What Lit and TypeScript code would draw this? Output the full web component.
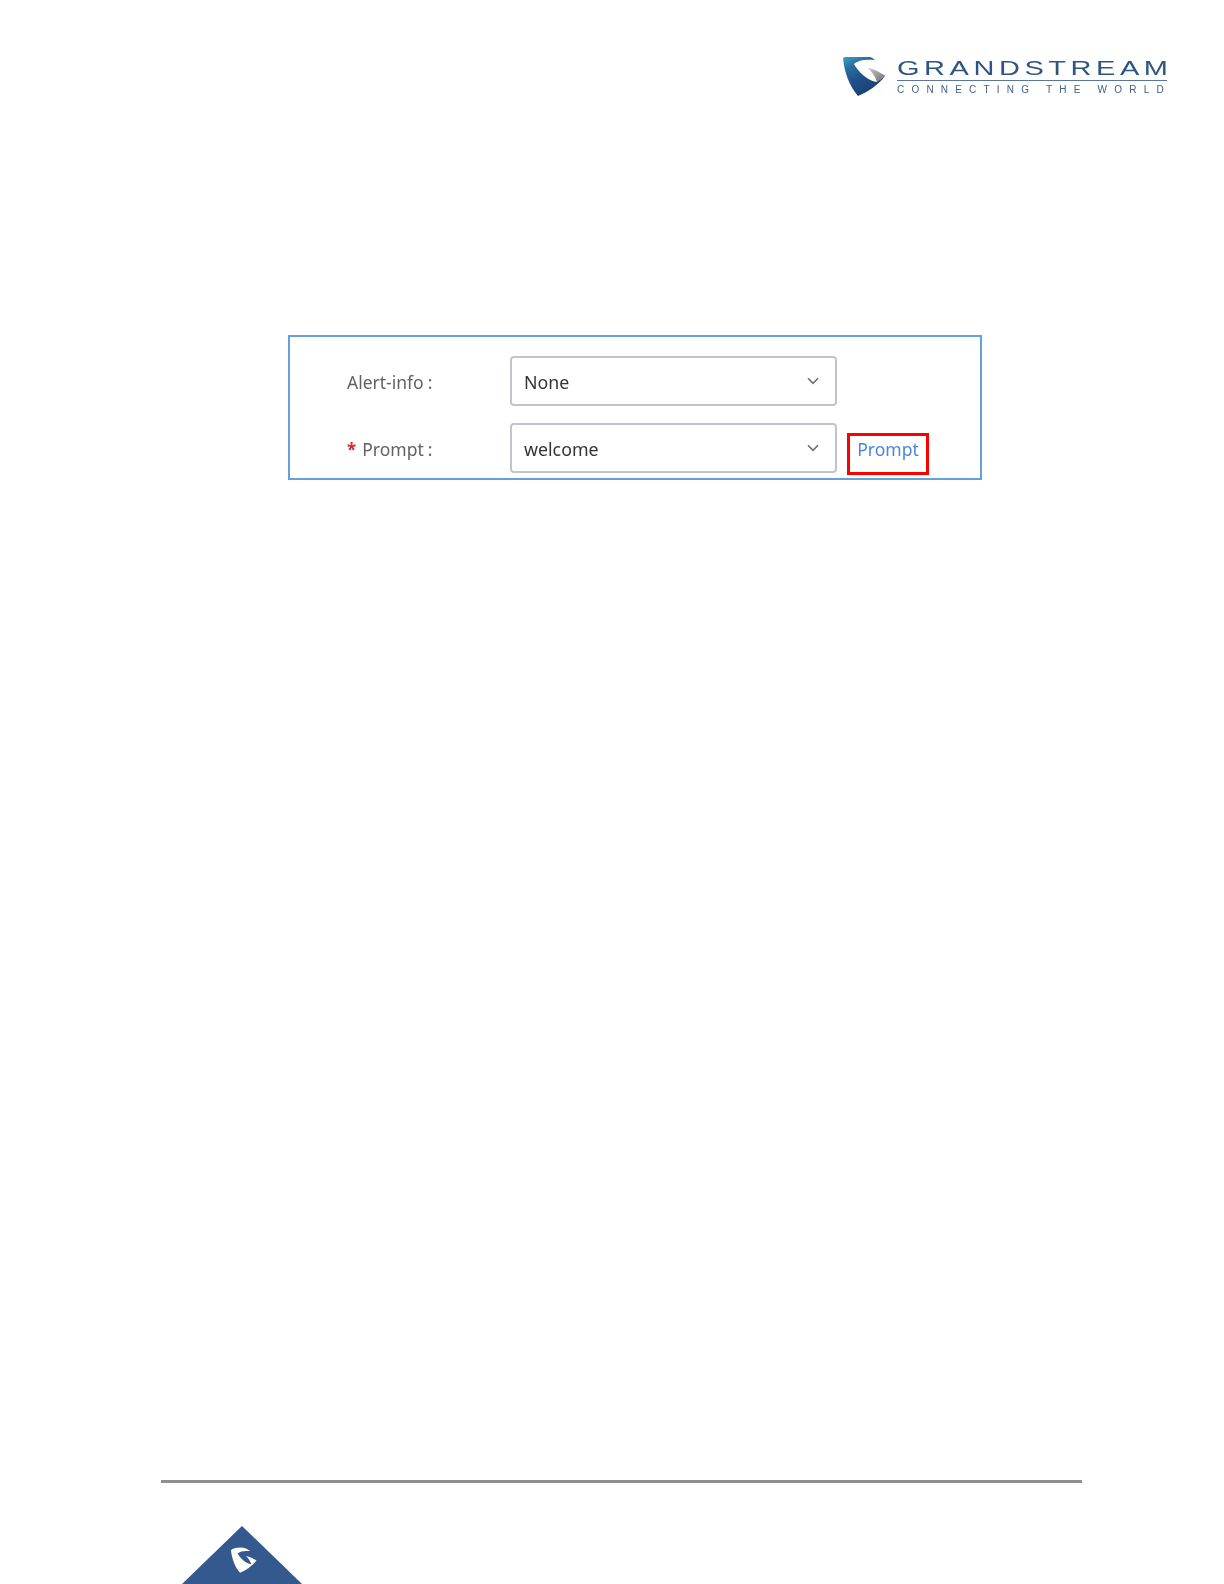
import { LitElement, html, css, svg } from "lit";
import { customElement } from "lit/decorators.js";

const chevron = html`<svg class="chev" viewBox="0 0 12 8" width="12" height="8"><path d="M1 1.2 L6 6.4 L11 1.2" fill="none" stroke="#6f6f6f" stroke-width="1.6"/></svg>`;

@customElement("app-root")
export class AppRoot extends LitElement {
  static styles = css`
    :host {
      display: block;
      position: relative;
      width: 1224px;
      height: 1584px;
      overflow: hidden;
      background: #fff;
      font-family: "Noto Sans", "Open Sans", sans-serif;
    }
    .page {
      height: 1584px;
      display: flex;
      flex-direction: column;
    }
    .header {
      display: flex;
      justify-content: flex-end;
      align-items: flex-start;
      gap: 9px;
      padding: 57px 57px 0 0;
      height: 40px;
      filter: blur(0.4px);
    }
    .mark { display: block; }
    .word {
      width: 270px;
      display: flex;
      flex-direction: column;
      color: #2f5583;
      font-family: "Liberation Sans", sans-serif;
    }
    .brand {
      font-size: 21px;
      line-height: 22px;
      height: 21px;
      letter-spacing: 3.3px;
      white-space: nowrap;
      transform: scaleX(1.38);
      transform-origin: left center;
    }
    .rule { height: 1px; background: #5b7796; margin-top: 2px; }
    .tag {
      font-size: 10px;
      line-height: 12px;
      margin-top: 3px;
      letter-spacing: 7.2px;
      white-space: nowrap;
      color: #3f6288;
    }
    .panel {
      box-sizing: border-box;
      width: 694px;
      height: 145px;
      margin: 238px 0 0 288px;
      border: 2px solid #64a0dc;
      padding: 19px 0 0 57px;
      display: flex;
      flex-direction: column;
      gap: 17px;
      filter: blur(0.3px);
    }
    .row { display: flex; align-items: flex-start; height: 50px; }
    .label {
      width: 163px;
      flex: none;
      height: 50px;
      padding-top: 2px;
      box-sizing: border-box;
      display: flex;
      align-items: center;
      font-size: 17.5px;
      color: #626262;
    }
    .req { color: #d9262c; margin-right: 6px; font-size: 17px; font-weight: 700; }
    .colon { margin-left: 4px; }
    .select {
      box-sizing: border-box;
      width: 327px;
      height: 50px;
      flex: none;
      border: 2px solid #c0c4cc;
      border-radius: 4px;
      display: flex;
      align-items: center;
      justify-content: space-between;
      padding: 2px 16px 0 12px;
      font-size: 17.8px;
      color: #333;
    }
    .chev { margin-top: -2px; }
    .link {
      box-sizing: border-box;
      flex: none;
      width: 82px;
      height: 42px;
      margin: 10px 0 0 10px;
      border: 3px solid #ff0000;
      display: flex;
      align-items: flex-start;
      justify-content: center;
      padding-top: 1px;
      font-size: 17.5px;
      line-height: 24px;
      color: #4a86e0;
    }
    .foot { margin-top: auto; display: flex; flex-direction: column; }
    .line {
      height: 3px;
      width: 921px;
      margin-left: 161px;
      background: #8f8f8f;
      filter: blur(0.4px);
    }
    .tri { display: block; margin: 43px 0 0 182px; }
  `;

  render() {
    const gBody = svg`<path d="M5 11 C15 6 27 5 37 13 C28 12 20 13 16 17 C20 24 27 32 38 35 L47 29.5 C40 38 30 45 20 49 C12 40 6 25 5 11Z"/>`;
    const gTail = svg`<path d="M30 21 C37 22 43 26 47.5 29 L39 35 C37 29 34 25 30 21Z"/>`;
    return html`
      <div class="page">
        <div class="header">
          <svg class="mark" width="46" height="41" viewBox="4 10 46 41">
            <defs>
              <linearGradient id="gb" x1="0.1" y1="0" x2="0.6" y2="1">
                <stop offset="0" stop-color="#3fa6c4"/>
                <stop offset="0.28" stop-color="#2a6d9f"/>
                <stop offset="0.6" stop-color="#1f4f88"/>
                <stop offset="1" stop-color="#173f70"/>
              </linearGradient>
              <linearGradient id="gg" x1="0" y1="0" x2="1" y2="1">
                <stop offset="0" stop-color="#c9c9c9"/>
                <stop offset="1" stop-color="#6d6d6d"/>
              </linearGradient>
            </defs>
            <path fill="url(#gb)" d="M5 11 C15 6 27 5 37 13 C28 12 20 13 16 17 C20 24 27 32 38 35 L47 29.5 C40 38 30 45 20 49 C12 40 6 25 5 11Z"/>
            <path fill="url(#gg)" d="M30 21 C37 22 43 26 47.5 29 L39 35 C37 29 34 25 30 21Z"/>
          </svg>
          <div class="word">
            <div class="brand">GRANDSTREAM</div>
            <div class="rule"></div>
            <div class="tag">CONNECTING THE WORLD</div>
          </div>
        </div>

        <div class="panel">
          <div class="row">
            <div class="label">Alert-info<span class="colon">:</span></div>
            <div class="select"><span>None</span>${chevron}</div>
          </div>
          <div class="row">
            <div class="label"><span class="req">*</span>Prompt<span class="colon">:</span></div>
            <div class="select"><span>welcome</span>${chevron}</div>
            <div class="link">Prompt</div>
          </div>
        </div>

        <div class="foot">
          <div class="line"></div>
          <svg class="tri" width="120" height="58" viewBox="0 0 120 58">
            <polygon points="60,0 120,58 0,58" fill="#34598f"/>
            <g fill="#fff" transform="translate(49 21.5) scale(0.6) translate(-5 -7)">${gBody}${gTail}</g>
          </svg>
        </div>
      </div>
    `;
  }
}
